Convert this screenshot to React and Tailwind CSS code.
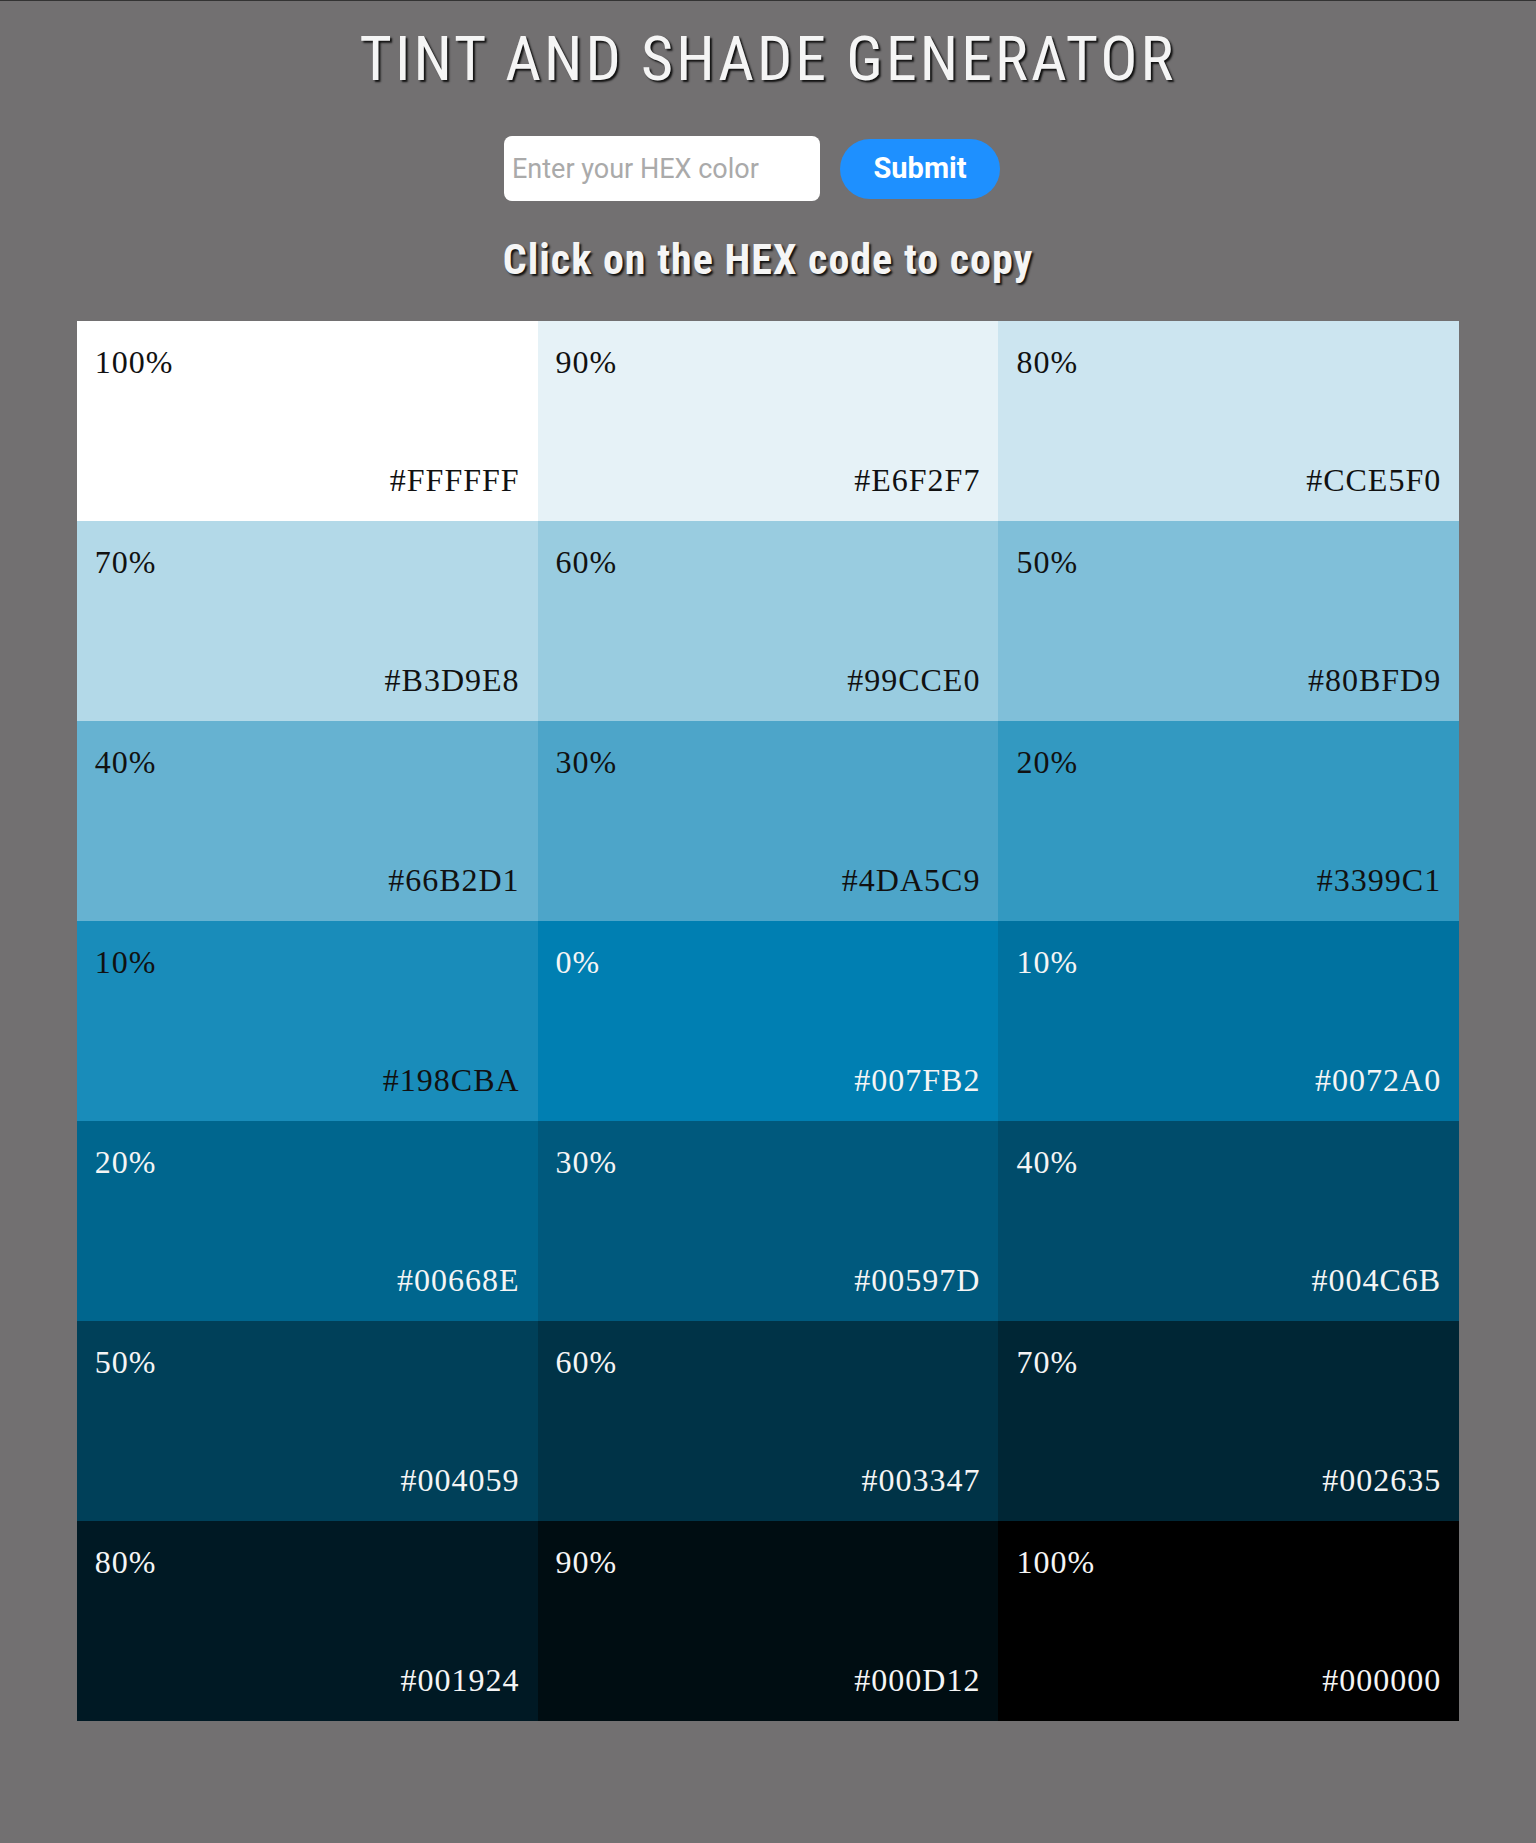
import React, { useState } from "react";

const colors = [
  { pct: "100%", hex: "#FFFFFF", dark: true },
  { pct: "90%", hex: "#E6F2F7", dark: true },
  { pct: "80%", hex: "#CCE5F0", dark: true },
  { pct: "70%", hex: "#B3D9E8", dark: true },
  { pct: "60%", hex: "#99CCE0", dark: true },
  { pct: "50%", hex: "#80BFD9", dark: true },
  { pct: "40%", hex: "#66B2D1", dark: true },
  { pct: "30%", hex: "#4DA5C9", dark: true },
  { pct: "20%", hex: "#3399C1", dark: true },
  { pct: "10%", hex: "#198CBA", dark: true },
  { pct: "0%", hex: "#007FB2", dark: false },
  { pct: "10%", hex: "#0072A0", dark: false },
  { pct: "20%", hex: "#00668E", dark: false },
  { pct: "30%", hex: "#00597D", dark: false },
  { pct: "40%", hex: "#004C6B", dark: false },
  { pct: "50%", hex: "#004059", dark: false },
  { pct: "60%", hex: "#003347", dark: false },
  { pct: "70%", hex: "#002635", dark: false },
  { pct: "80%", hex: "#001924", dark: false },
  { pct: "90%", hex: "#000D12", dark: false },
  { pct: "100%", hex: "#000000", dark: false },
];

const condensed = {
  fontFamily: '"Liberation Sans Narrow", "Roboto Condensed", Roboto, sans-serif',
};

export default function App() {
  const [hex, setHex] = useState("");

  return (
    <div className="min-h-[1843px] bg-[#727071] border-t border-[#333]">
      {/* Cabecera */}
      <h1
        className="pt-[26px] text-center text-[62px] leading-[64px] tracking-[3px] text-[#f5f5f5] [text-shadow:2px_2px_2px_#111]"
        style={condensed}
      >
        TINT AND SHADE GENERATOR
      </h1>

      <div className="mt-[45px] pr-[32px] flex justify-center items-center gap-[20px]">
        <input
          type="text"
          value={hex}
          onChange={(e) => setHex(e.target.value)}
          placeholder="Enter your HEX color"
          className="w-[316px] h-[65px] bg-white rounded-[8px] px-[8px] text-[27px] text-black placeholder:text-[#aaa] outline-none font-['Roboto',sans-serif]"
        />
        <button className="w-[160px] h-[60px] rounded-full bg-[#1e90ff] text-white text-[29px] font-bold font-['Roboto',sans-serif]">
          Submit
        </button>
      </div>

      <h2
        className="mt-[33px] text-center text-[42px] leading-[52px] font-bold tracking-[1px] text-[#f5f5f5] [text-shadow:2px_2px_2px_#111]"
        style={condensed}
      >
        Click on the HEX code to copy
      </h2>

      {/* Tintes y sombras */}
      <div className="mt-[35px] mx-auto w-[90%] grid grid-cols-3">
        {colors.map((c, i) => (
          <div
            key={i}
            className={
              "h-[200px] px-[18px] py-[17px] flex flex-col justify-between font-['Liberation_Serif',serif] text-[32px] leading-[48px] tracking-[1px] " +
              (c.dark ? "text-[#111]" : "text-[#f5f5f5]")
            }
            style={{ backgroundColor: c.hex }}
          >
            <div>{c.pct}</div>
            <div className="text-right cursor-pointer">{c.hex}</div>
          </div>
        ))}
      </div>
    </div>
  );
}
